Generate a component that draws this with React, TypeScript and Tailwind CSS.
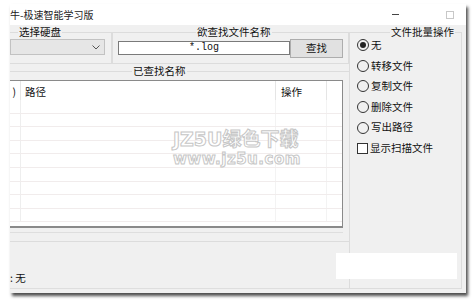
import React from "react";

const font = { fontFamily: '"Noto Sans CJK SC", "Noto Sans", sans-serif' };

function Radio({ label, checked }: { label: string; checked?: boolean }) {
  return (
    <div className="flex items-center h-[20.6px] pl-[7px]">
      <div className="w-[12px] h-[12px] rounded-full border border-[#333] flex items-center justify-center bg-[#f0f0f0]">
        {checked && <div className="w-[6px] h-[6px] rounded-full bg-[#222]" />}
      </div>
      <span className="ml-[2px] text-[10.5px] leading-none text-[#111]">{label}</span>
    </div>
  );
}

export default function App() {
  const rows = Array.from({ length: 9 });

  return (
    <div className="w-[476px] h-[305px] bg-white pl-[10px] pt-[4px] overflow-hidden" style={font}>
      <div className="relative w-[456px] h-[289px] bg-[#f0f0f0] shadow-[2px_3px_3px_rgba(0,0,0,0.7)] flex flex-col">
        {/* title bar */}
        <div className="h-[21px] bg-white flex items-center shrink-0">
          <span className="text-[10px] leading-none text-[#222] mt-[1px]">牛-极速智能学习版</span>
          <div className="ml-auto mr-[47px] w-[7px] h-px bg-[#444]" />
          <div className="mr-[12px] w-[8px] h-[8px] border border-[#c8c8c8]" />
        </div>

        <div className="flex flex-1">
          {/* left column */}
          <div className="w-[339px] flex flex-col">
            <div className="flex h-[39px]">
              {/* 选择硬盘 */}
              <div className="w-[102px] flex flex-col">
                <div className="flex items-center h-[14px]">
                  <div className="w-[8px] h-px bg-[#dcdcdc]" />
                  <span className="text-[10.5px] leading-none text-[#111] px-px">选择硬盘</span>
                  <div className="flex-1 h-px bg-[#dcdcdc]" />
                </div>
                <div className="-mt-[7px] h-[32px] border-r border-b border-[#dcdcdc] pt-[7px]">
                  <div className="w-[95px] h-[16px] bg-[#e6e6e6] border border-[#c2c2c2] flex items-center justify-end pr-[4px]">
                    <svg width="8" height="5" viewBox="0 0 8 5">
                      <path d="M0.5 0.5 L4 4 L7.5 0.5" fill="none" stroke="#555" strokeWidth="1" />
                    </svg>
                  </div>
                </div>
              </div>
              {/* 欲查找文件名称 */}
              <div className="w-[237px] flex flex-col">
                <div className="flex items-center h-[14px]">
                  <div className="w-[84px] h-px bg-[#dcdcdc]" />
                  <span className="text-[10.5px] leading-none text-[#111] px-px">欲查找文件名称</span>
                  <div className="flex-1 h-px bg-[#dcdcdc]" />
                </div>
                <div className="-mt-[7px] h-[32px] border-x border-b border-[#dcdcdc] flex items-center pl-[5px] pt-[1px]">
                  <div className="w-[172px] h-[14px] bg-white border border-[#7a7a7a] flex items-center justify-center">
                    <span className="text-[10px] leading-none text-[#111]" style={{ fontFamily: '"Liberation Mono", monospace' }}>*.log</span>
                  </div>
                  <div className="w-[53px] h-[19px] bg-[#e1e1e1] border border-[#adadad] flex items-center justify-center">
                    <span className="text-[10.5px] leading-none text-[#111]">查找</span>
                  </div>
                </div>
              </div>
            </div>

            {/* 已查找名称 */}
            <div className="flex flex-col h-[178px]">
              <div className="flex items-center h-[14px]">
                <div className="w-[122px] h-px bg-[#dcdcdc]" />
                <span className="text-[10.5px] leading-none text-[#111] px-px">已查找名称</span>
                <div className="flex-1 h-px bg-[#dcdcdc]" />
              </div>
              <div className="-mt-[7px] flex-1 border-b border-[#dcdcdc] pt-[9px] pr-[6px] relative">
                <div className="h-[148px] bg-white border-t border-r border-b-2 border-[#8a8a8a] flex flex-col overflow-hidden">
                  <div className="flex h-[19px] shrink-0 text-[10.5px] leading-none text-[#111]">
                    <div className="w-[11px] border-r border-[#e5e5e5] flex items-center justify-end pr-[4px] pt-[4px] h-[19px]">)</div>
                    <div className="w-[255px] border-r border-[#e5e5e5] flex items-center pl-[4px] pt-[4px]">路径</div>
                    <div className="w-[51px] border-r border-[#e5e5e5] flex items-center pl-[5px] pt-[4px]">操作</div>
                    <div className="flex-1" />
                  </div>
                  {rows.map((_, i) => (
                    <div key={i} className="flex h-[13.6px] shrink-0 border-b border-[#f1ecec]">
                      <div className="w-[11px] border-r border-[#eeeeee]" />
                      <div className="w-[255px] border-r border-[#f3f3f3]" />
                      <div className="w-[51px] border-r border-[#f3f3f3]" />
                      <div className="flex-1" />
                    </div>
                  ))}
                </div>
                <div className="mt-[4px] h-px bg-[#dedede]" />
                {/* watermark */}
                <div
                  className="absolute left-[163px] top-[59px] flex flex-col items-start text-white font-bold leading-none [-webkit-text-stroke:1px_#c6c6c6]"
                  style={{ fontFamily: '"DejaVu Sans", "Noto Sans CJK SC", sans-serif' }}
                >
                  <span className="text-[19px]">JZ5U绿色下载</span>
                  <span className="text-[15px] mt-[3px] tracking-[0.5px]">www.jz5u.com</span>
                </div>
              </div>
            </div>

            {/* status */}
            <div className="flex-1 flex flex-col">
              <div className="flex-1 flex items-end pb-[5px]">
                <span className="text-[10.5px] leading-none text-[#111]">: 无</span>
              </div>
              <div className="h-px bg-[#dedede] mb-[4px]" />
            </div>
          </div>

          {/* right column: 文件批量操作 */}
          <div className="w-[113px] flex flex-col">
            <div className="flex items-center h-[14px]">
              <div className="flex-1 h-px bg-[#dcdcdc]" />
              <span className="text-[10.5px] leading-none text-[#111] px-px">文件批量操作</span>
              <div className="w-[7px] h-px bg-[#dcdcdc]" />
            </div>
            <div className="-mt-[7px] flex-1 border-x border-b border-[#dcdcdc] mb-[4px] pt-[3px]">
              <Radio label="无" checked />
              <Radio label="转移文件" />
              <Radio label="复制文件" />
              <Radio label="删除文件" />
              <Radio label="写出路径" />
              <div className="flex items-center h-[20.6px] pl-[7px]">
                <div className="w-[11px] h-[11px] border border-[#333] bg-white" />
                <span className="ml-[2px] text-[10.5px] leading-none text-[#111]">显示扫描文件</span>
              </div>
            </div>
          </div>
        </div>

        {/* white box overlay at bottom right */}
        <div className="absolute left-[326px] top-[249px] w-[121px] h-[26px] bg-white" />
      </div>
    </div>
  );
}
